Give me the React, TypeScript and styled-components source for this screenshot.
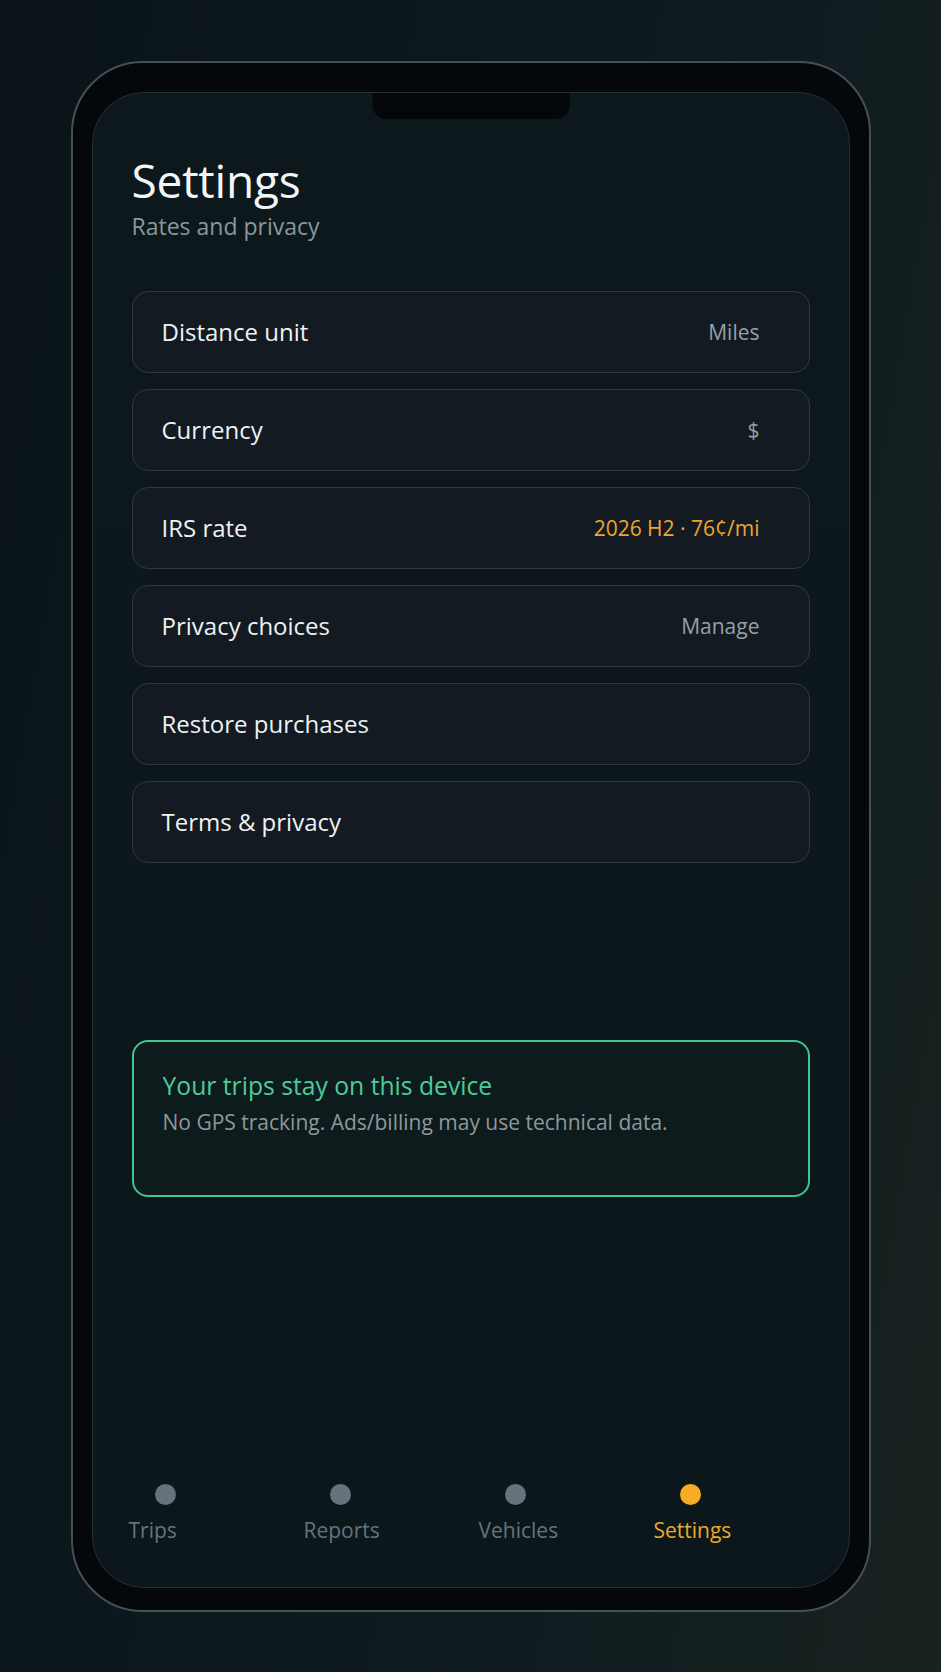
import React from 'react';
import styled, { createGlobalStyle } from 'styled-components';

interface SettingRow {
  label: string;
  value?: string;
  accent?: boolean;
}

interface TabItem {
  label: string;
  active?: boolean;
}

const rows: SettingRow[] = [
  { label: 'Distance unit', value: 'Miles' },
  { label: 'Currency', value: '$' },
  { label: 'IRS rate', value: '2026 H2 · 76¢/mi', accent: true },
  { label: 'Privacy choices', value: 'Manage' },
  { label: 'Restore purchases' },
  { label: 'Terms & privacy' },
];

const tabs: TabItem[] = [
  { label: 'Trips' },
  { label: 'Reports' },
  { label: 'Vehicles' },
  { label: 'Settings', active: true },
];

const GlobalStyle = createGlobalStyle`
  html, body {
    margin: 0;
    padding: 0;
  }
  body {
    font-family: "Open Sans", "Noto Sans", sans-serif;
    background: #0c161a;
  }
  * {
    box-sizing: border-box;
  }
`;

const App: React.FC = () => {
  return (
    <>
      <GlobalStyle />
      <Page>
        <Phone>
          <Screen>
            <Notch />
            <Header>
              <Title>Settings</Title>
              <Subtitle>Rates and privacy</Subtitle>
            </Header>
            <List>
              {rows.map((row) => (
                <Row key={row.label}>
                  <RowLabel>{row.label}</RowLabel>
                  {row.value && <RowValue $accent={row.accent}>{row.value}</RowValue>}
                </Row>
              ))}
            </List>
            <InfoCard>
              <InfoTitle>Your trips stay on this device</InfoTitle>
              <InfoText>No GPS tracking. Ads/billing may use technical data.</InfoText>
            </InfoCard>
            <TabBar>
              {tabs.map((tab) => (
                <Tab key={tab.label}>
                  <TabDot $active={tab.active} />
                  <TabLabel $active={tab.active}>{tab.label}</TabLabel>
                </Tab>
              ))}
            </TabBar>
          </Screen>
        </Phone>
      </Page>
    </>
  );
};

const Page = styled.div`
  width: 941px;
  height: 1672px;
  display: flex;
  justify-content: center;
  align-items: center;
  background: linear-gradient(100deg, #0a1418 0%, #0d1a1f 55%, #182220 100%);
`;
const Phone = styled.div`
  width: 800px;
  height: 1551px;
  padding: 29px 19px 22px;
  border: 2px solid #465054;
  border-radius: 72px;
  background: #04080b;
`;
const Screen = styled.div`
  position: relative;
  height: 100%;
  display: flex;
  flex-direction: column;
  padding: 60px 39px 0;
  border: 1px solid #232f34;
  border-radius: 52px;
  background: linear-gradient(180deg, #0d181d 0%, #0c171b 100%);
  overflow: hidden;
`;
const Notch = styled.div`
  position: absolute;
  top: -1px;
  left: 50%;
  width: 197px;
  height: 27px;
  transform: translateX(-50%);
  border-radius: 0 0 14px 14px;
  background: #03070a;
`;
const Header = styled.div`
  display: flex;
  flex-direction: column;
`;
const Title = styled.h1`
  margin: 0;
  font-size: 46px;
  font-weight: 400;
  line-height: 55px;
  letter-spacing: -0.2px;
  color: #f2f6f5;
`;
const Subtitle = styled.p`
  margin: 3px 0 0;
  font-size: 23px;
  line-height: 30px;
  color: #8a979c;
`;
const List = styled.div`
  display: flex;
  flex-direction: column;
  gap: 16px;
  margin-top: 50px;
`;
const Row = styled.div`
  height: 82px;
  display: flex;
  align-items: center;
  justify-content: space-between;
  padding: 0 49px 0 29px;
  border: 1.5px solid #2d393f;
  border-radius: 16px;
  background: #131a21;
`;
const RowLabel = styled.span`
  font-size: 24px;
  color: #eef2f3;
`;
const RowValue = styled.span<{ $accent?: boolean }>`
  font-size: 21px;
  color: ${({ $accent }) => ($accent ? '#eca72c' : '#96a1a6')};
`;
const InfoCard = styled.div`
  height: 157px;
  margin-top: 177px;
  padding: 28px 29px 0;
  border: 2px solid #3cc690;
  border-radius: 16px;
  background: #0e1b1c;
`;
const InfoTitle = styled.div`
  font-size: 24.7px;
  line-height: 32px;
  color: #4dcb98;
`;
const InfoText = styled.div`
  margin-top: 6px;
  font-size: 21px;
  line-height: 29px;
  color: #8d989c;
`;
const TabBar = styled.nav`
  display: grid;
  grid-template-columns: repeat(4, 175px);
  margin: auto -39px 0;
  padding: 0 0 43px 36px;
`;
const Tab = styled.div`
  display: flex;
  flex-direction: column;
  align-items: flex-start;
  gap: 12px;
`;
const TabDot = styled.span<{ $active?: boolean }>`
  width: 21px;
  height: 21px;
  margin-left: 26px;
  border-radius: 50%;
  background: ${({ $active }) => ($active ? '#f7ad23' : '#66737a')};
`;
const TabLabel = styled.span<{ $active?: boolean }>`
  font-size: 21px;
  line-height: 27px;
  color: ${({ $active }) => ($active ? '#eda92a' : '#66747a')};
`;

export default App;
